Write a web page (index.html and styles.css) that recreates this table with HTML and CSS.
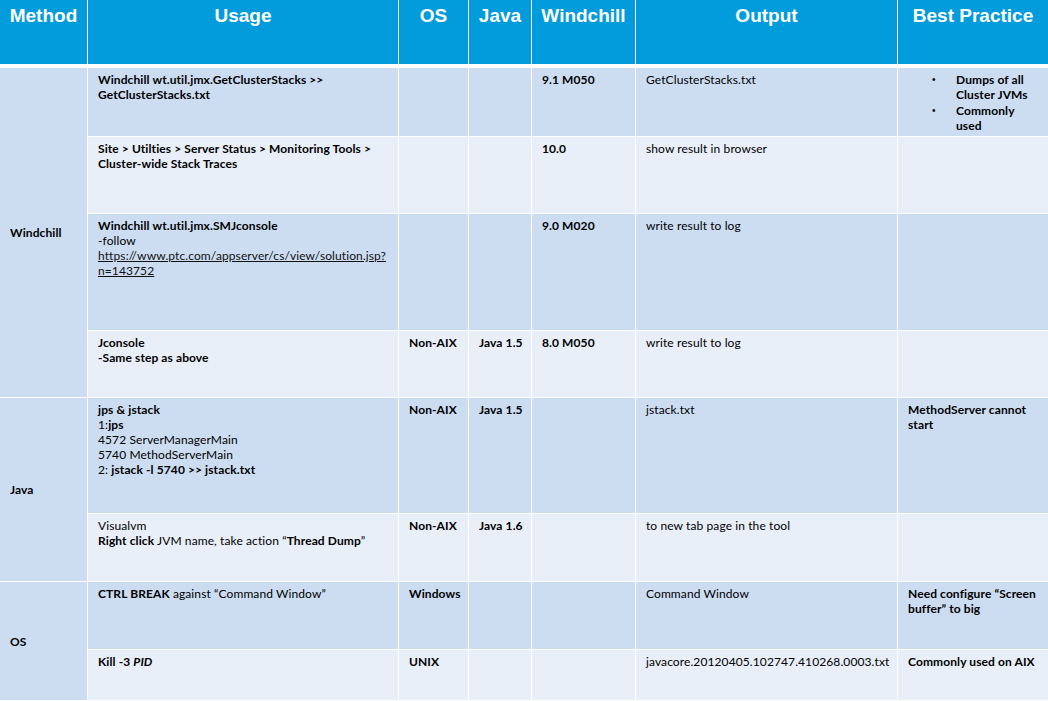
FILE: index.html
```html
<!DOCTYPE html>
<html lang="en">
<head>
<meta charset="utf-8">
<title>Thread dump methods</title>
<link rel="stylesheet" href="styles.css">
</head>
<body>
<table class="grid">
  <colgroup>
    <col class="c-method">
    <col class="c-usage">
    <col class="c-os">
    <col class="c-java">
    <col class="c-wc">
    <col class="c-out">
    <col class="c-best">
  </colgroup>
  <thead>
    <tr class="head">
      <th>Method</th>
      <th>Usage</th>
      <th>OS</th>
      <th>Java</th>
      <th>Windchill</th>
      <th>Output</th>
      <th>Best Practice</th>
    </tr>
  </thead>
  <tbody>
    <tr class="dark r1">
      <td class="method" rowspan="4">Windchill</td>
      <td class="b">Windchill wt.util.jmx.GetClusterStacks &gt;&gt;<br>GetClusterStacks.txt</td>
      <td></td>
      <td></td>
      <td class="b">9.1 M050</td>
      <td>GetClusterStacks.txt</td>
      <td class="b bp">
        <ul class="bullets">
          <li><span>Dumps of all<br>Cluster JVMs</span></li>
          <li><span>Commonly<br>used</span></li>
        </ul>
      </td>
    </tr>
    <tr class="light r2">
      <td class="b">Site &gt; Utilties &gt; Server Status &gt; Monitoring Tools &gt;<br>Cluster-wide Stack Traces</td>
      <td></td>
      <td></td>
      <td class="b">10.0</td>
      <td>show result in browser</td>
      <td></td>
    </tr>
    <tr class="dark r3">
      <td><b>Windchill wt.util.jmx.SMJconsole</b><br>-follow<br><a class="link" href="#">https://www.ptc.com/appserver/cs/view/solution.jsp?<br>n=143752</a></td>
      <td></td>
      <td></td>
      <td class="b">9.0 M020</td>
      <td>write result to log</td>
      <td></td>
    </tr>
    <tr class="light r4">
      <td class="b">Jconsole<br>-Same step as above</td>
      <td class="b">Non-AIX</td>
      <td class="b">Java 1.5</td>
      <td class="b">8.0 M050</td>
      <td>write result to log</td>
      <td></td>
    </tr>
    <tr class="dark r5">
      <td class="method" rowspan="2">Java</td>
      <td><b>jps &amp; jstack</b><br>1:<b>jps</b><br>4572 ServerManagerMain<br>5740 MethodServerMain<br>2: <b>jstack -l 5740 &gt;&gt; jstack.txt</b></td>
      <td class="b">Non-AIX</td>
      <td class="b">Java 1.5</td>
      <td></td>
      <td>jstack.txt</td>
      <td class="b">MethodServer cannot<br>start</td>
    </tr>
    <tr class="light r6">
      <td>Visualvm<br><b>Right click</b> JVM name, take action “<b>Thread Dump</b>”</td>
      <td class="b">Non-AIX</td>
      <td class="b">Java 1.6</td>
      <td></td>
      <td>to new tab page in the tool</td>
      <td></td>
    </tr>
    <tr class="dark r7">
      <td class="method" rowspan="2">OS</td>
      <td><b>CTRL BREAK</b> against “Command Window”</td>
      <td class="b">Windows</td>
      <td></td>
      <td></td>
      <td>Command Window</td>
      <td class="b">Need configure “Screen<br>buffer” to big</td>
    </tr>
    <tr class="light r8">
      <td class="b">Kill -3 <i>PID</i></td>
      <td class="b">UNIX</td>
      <td></td>
      <td></td>
      <td>javacore.20120405.102747.410268.0003.txt</td>
      <td class="b">Commonly used on AIX</td>
    </tr>
  </tbody>
</table>
</body>
</html>
```

FILE: styles.css
```css
html, body {
  margin: 0;
  padding: 0;
  background: #ffffff;
}

.grid {
  width: 1048px;
  table-layout: fixed;
  border-collapse: separate;
  border-spacing: 0;
  font-family: Lato, "Open Sans", sans-serif;
  font-size: 12px;
  letter-spacing: 0.1px;
  line-height: 15px;
  color: #000000;
}

.c-method { width: 88px; }
.c-usage { width: 311px; }
.c-os { width: 70px; }
.c-java { width: 63px; }
.c-wc { width: 104px; }
.c-out { width: 262px; }
.c-best { width: 150px; }

.grid th {
  background: #029cdc;
  color: #ffffff;
  font-family: "Liberation Sans", Arial, sans-serif;
  font-weight: bold;
  font-size: 19px;
  line-height: 22px;
  letter-spacing: 0;
  text-align: center;
  vertical-align: top;
  padding: 5px 0 0;
  border-right: 1px solid #ffffff;
  border-bottom: 4px solid #ffffff;
  white-space: nowrap;
}

.grid td {
  vertical-align: top;
  text-align: left;
  padding: 4px 4px 0 10px;
  border-right: 1px solid #ffffff;
  border-bottom: 1px solid #ffffff;
  white-space: nowrap;
}

.grid th:last-child,
.grid td:last-child {
  border-right: 0;
}

.head { height: 68px; }
.r1 { height: 69px; }
.r2 { height: 77px; }
.r3 { height: 117px; }
.r4 { height: 67px; }
.r5 { height: 116px; }
.r6 { height: 68px; }
.r7 { height: 68px; }
.r8 { height: 51px; }

.dark td { background: #ccddf2; }
.light td { background: #e8eff8; }

.grid td.method {
  background: #ccddf2;
  vertical-align: middle;
  font-weight: bold;
  padding-top: 0;
}

.b { font-weight: bold; }

.link {
  color: #111111;
  text-decoration: underline;
}

.bullets {
  list-style: none;
  margin: 0;
  padding: 0 0 0 24px;
}

.bullets li {
  display: flex;
  margin-bottom: 1px;
}

.bullets li::before {
  content: "•";
  flex: none;
  width: 24px;
  font-family: "Liberation Sans", Arial, sans-serif;
  font-size: 10px;
  font-weight: normal;
}
```
